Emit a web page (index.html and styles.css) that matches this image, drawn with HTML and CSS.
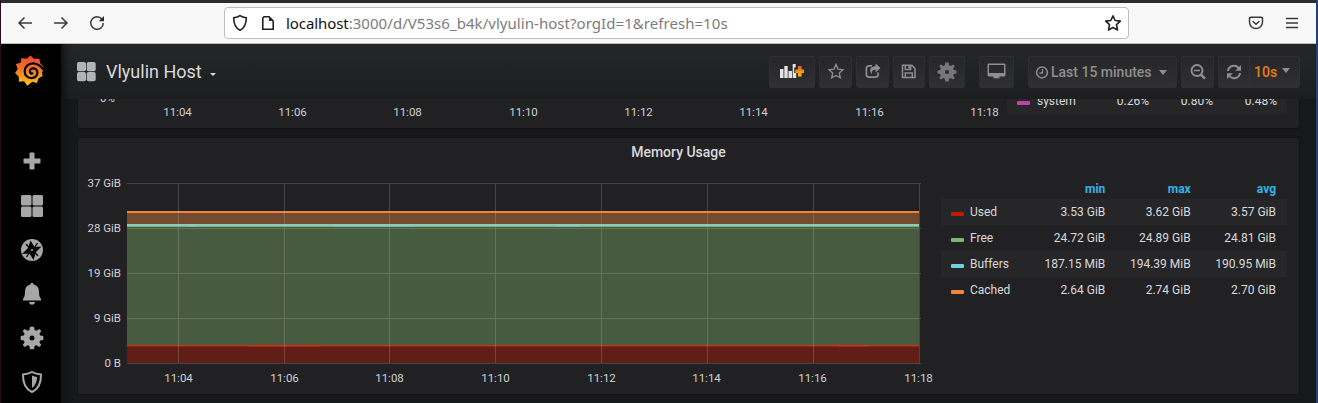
FILE: index.html
```html
<!DOCTYPE html>
<html lang="en">
<head>
<meta charset="utf-8">
<title>Vlyulin Host</title>
<link rel="stylesheet" href="styles.css">
</head>
<body>
<div class="window">
  <div class="browser">
    <svg class="nav-icon" width="18" height="18" viewBox="0 0 18 18"><path d="M16 9H3M8.500 3.500L3 9l5.500 5.500"/></svg>
    <svg class="nav-icon" width="18" height="18" viewBox="0 0 18 18"><path d="M2 9h13M9.500 3.500L15 9l-5.500 5.500"/></svg>
    <svg class="nav-icon" width="18" height="18" viewBox="0 0 18 18"><path d="M14 5.200A6.300 6.300 0 1 0 15.300 9"/><path d="M16 2v5.200h-5.200z"/></svg>
    <div class="url-bar">
      <svg width="16" height="18" viewBox="0 0 16 18"><path d="M8 1.700c2 1.500 4 1.900 6.300 2.100 0 6-1.600 10.300-6.300 12.400C3.300 14.100 1.700 9.800 1.700 3.800 4 3.600 6 3.200 8 1.700z"/></svg>
      <svg class="page-icon" width="14" height="16" viewBox="0 0 14 16"><path d="M3 1.800h5l4.200 4.200v8.200H1.800V3z"/><path d="M8 1l5 5H8z"/></svg>
      <span class="url"><b>localhost</b><i>:3000/d/V53s6_b4k/vlyulin-host?orgId=1&amp;refresh=10s</i></span>
      <svg class="bookmark" width="18" height="18" viewBox="0 0 18 18"><path d="M9 1.800l2.200 4.700 5.100.6-3.800 3.500 1 5.400L9 13.500 4.500 16l1-5.400L1.700 7.100l5.100-.6z" stroke-linejoin="round"/></svg>
    </div>
    <svg class="pocket" width="16" height="16" viewBox="0 0 16 16"><path d="M2.700 2.200h10.600c.8 0 1.200.5 1.200 1.200V7c0 3.800-3 6.500-6.500 6.500S1.500 10.800 1.500 7V3.400c0-.7.400-1.200 1.200-1.200zM4.700 6.200L8 9.300l3.300-3.100"/></svg>
    <svg class="burger" width="14" height="14" viewBox="0 0 14 14"><path d="M1 2.500h12M1 7h12M1 11.500h12"/></svg>
  </div>
  <div class="app">
    <nav class="sidebar">
      <svg class="logo" width="30" height="32" viewBox="0 0 30 32">
        <defs><linearGradient id="flame" x1="0" y1="0" x2="0" y2="1"><stop offset="0" stop-color="#f0452c"/><stop offset=".45" stop-color="#f2742b"/><stop offset="1" stop-color="#fcc80d"/></linearGradient></defs>
        <path fill="url(#flame)" d="M15.500.5l3.400 3.300 5.400-.1 1 4.800 2.900 2.700.3 4.200-1.500 1.500.6 4-4 2.300-1.700 4.900-4.600-1.300-5 3.900-3.200-4.500-5.200.5-.2-5.200L0 18l2.700-4L.900 9l4.800-1.300.8-4.600 5.300.7z"/>
        <path fill="none" stroke="#000" stroke-width="2.200" stroke-linecap="round" d="M28.500 14.500C25.500 10.500 22 8.400 18 8.400c-5 0-8.300 3.800-8.300 8 0 4 3 6.700 6.700 6.700 3.900 0 6.200-2.700 6-5.700-.2-2.700-2.200-4.300-4.400-4.100-2.300.2-3.300 1.900-3 3.500.200 1.300 1.300 2 2.300 1.700"/>
      </svg>
      <svg class="side-icon" width="24" height="24" viewBox="0 0 24 24"><rect x="3.500" y="9.500" width="17" height="5" rx="1"/><rect x="9.500" y="3.500" width="5" height="17" rx="1"/></svg>
      <svg class="side-icon" width="24" height="24" viewBox="0 0 24 24"><rect x="1" y="1" width="10.500" height="10.500" rx="1.500"/><rect x="12.500" y="1" width="10.500" height="10.500" rx="1.500"/><rect x="1" y="12.500" width="10.500" height="10.500" rx="1.500"/><rect x="12.500" y="12.500" width="10.500" height="10.500" rx="1.500"/></svg>
      <svg class="side-icon" width="24" height="24" viewBox="0 0 24 24"><circle cx="12" cy="12" r="11"/><path fill="#000" d="M10.500 2.500l4 6.500 7-.5-5.500 5.500-2.500 8-4-6.500-7.500.5L8 10z"/><path fill="none" stroke="#000" stroke-width="1.300" d="M6 6l3 3.500M18 18l-3-3.500M17.500 5l-3 4.500M6.500 19l3-4.500"/><circle cx="12" cy="12" r="1"/></svg>
      <svg class="side-icon" width="24" height="24" viewBox="0 0 24 24"><path d="M12 1c1 0 1.600.6 1.800 1.500C17.300 3.500 19 6 19 9.500c0 4 .5 5.500 2 7.500v1.500H3V17c1.500-2 2-3.500 2-7.500 0-3.500 1.700-6 5.200-7C10.400 1.600 11 1 12 1zM9 20h6c-.3 1.700-1.500 2.700-3 2.700S9.300 21.700 9 20z"/></svg>
      <svg class="side-icon" width="24" height="24" viewBox="0 0 24 24"><use href="#gear"/></svg>
      <svg class="side-icon" width="24" height="24" viewBox="0 0 24 24"><path d="M12 2c3 1.700 6 2.300 9 2.400C21.200 12.500 18.600 18.800 12 22 5.400 18.800 2.800 12.500 3 4.400 6 4.300 9 3.700 12 2z" fill="none" stroke="#aaa" stroke-width="2"/><path d="M12 5.500c1.600.8 3.400 1.300 5.200 1.500-.3 4.700-1.900 8.500-5.200 11z"/></svg>
    </nav>
    <main class="main">
      <header class="toolbar">
        <svg class="dash-icon" width="20" height="20" viewBox="0 0 20 20"><rect x="1" width="9" height="9.300" rx="1.800"/><rect x="10.700" width="9" height="9.300" rx="1.800"/><rect x="1" y="9.900" width="9" height="9.300" rx="1.800"/><rect x="10.700" y="9.900" width="9" height="9.300" rx="1.800"/></svg>
        <h1 class="title">Vlyulin Host</h1>
        <span class="caret title-caret"></span>
        <div class="actions">
          <button class="btn add"><svg width="26" height="18" viewBox="0 0 26 18"><defs><linearGradient id="plus" x1="0" y1="0" x2="0" y2="1"><stop offset="0" stop-color="#f05a28"/><stop offset="1" stop-color="#fbca0a"/></linearGradient></defs><path fill="#e3e3e3" d="M1 6h3.500v9H1zM5.300 3h3.400v12H5.300zM9.500 8H13v7H9.500zM13.700 1h3v3.500h-1.500v5.500h2v5h-3.500z"/><path fill="url(#plus)" d="M19 3h3.500v3.500H25V10h-2.500v3.500H19V10h-2.700V6.500H19z"/></svg></button>
          <button class="btn star"><svg width="18" height="18" viewBox="0 0 18 18"><path fill="none" stroke="#8e8e8e" stroke-width="1.300" d="M9 1.400l2 4.700 5 .6-3.700 3.300 1 4.800L9 12.400l-4.300 2.400 1-4.800L2 6.700l5-.6z"/></svg></button>
          <button class="btn share"><svg width="18" height="18" viewBox="0 0 18 18"><path fill="none" stroke="#8e8e8e" stroke-width="1.700" d="M8 2.800H5A2.600 2.600 0 0 0 2.400 5.400v6.200A2.600 2.600 0 0 0 5 14.200h6.500a2.600 2.600 0 0 0 2.600-2.600v-2"/><path fill="#8e8e8e" d="M11.500.5l5 4.500-5 4.500V6.800C8.300 6.800 7.500 8.500 8.200 11.500 4.500 7.600 6 3.200 11.500 3.200z"/></svg></button>
          <button class="btn save"><svg width="18" height="18" viewBox="0 0 18 18"><path fill="none" stroke="#8e8e8e" stroke-width="1.500" d="M2.500 2.300h9.300l3.200 3.200v8.900H2.500zM5.300 14v-4h7v4M5.300 2.500v4h5.400v-4"/><path fill="#8e8e8e" d="M8.300 2.500h2v3h-2z"/></svg></button>
          <button class="btn cog"><svg width="20" height="20" viewBox="0 0 24 24"><g id="gear"><path fill-rule="evenodd" d="M10 .7h4l.6 3.300 1.800.8 2.900-1.900 2 2-1.900 2.900.8 1.700 3.100.6v3.800l-3.100.6-.8 1.700 1.900 2.900-2 2-2.900-1.900-1.800.8-.6 3.300h-4l-.6-3.300-1.800-.8-2.900 1.900-2-2 1.900-2.900-.8-1.700-3.100-.6v-3.800l3.100-.6.800-1.700-1.900-2.900 2-2 2.900 1.900 1.800-.8zM12 9.500a2.500 2.500 0 1 0 0 5 2.500 2.500 0 0 0 0-5z"/></g></svg></button>
          <button class="btn tv"><svg width="20" height="18" viewBox="0 0 20 18"><path fill-rule="evenodd" d="M2 .5h15c.9 0 1.500.6 1.500 1.500v10c0 .9-.6 1.500-1.500 1.500h-4.500v1.800h-6v-1.800H2C1.100 13.500.5 12.900.5 12V2C.5 1.100 1.100.5 2 .5zm0 1.400v8h15v-8z"/></svg></button>
          <button class="btn time"><svg width="14" height="14" viewBox="0 0 14 14"><circle cx="7" cy="7.500" r="5.400" fill="none" stroke="#8e8e8e" stroke-width="1.500"/><path fill="none" stroke="#8e8e8e" stroke-width="1.300" d="M7.500 4v4H4.500"/></svg><span>Last 15 minutes</span><span class="caret"></span></button>
          <button class="btn zoom"><svg width="18" height="18" viewBox="0 0 18 18"><path fill="none" stroke="#8e8e8e" stroke-width="1.600" d="M5 7.500h6"/><circle cx="8" cy="7.500" r="5.500" fill="none" stroke="#8e8e8e" stroke-width="2"/><path fill="none" stroke="#8e8e8e" stroke-width="2.600" d="M11.800 11.500l4.200 4.200"/></svg></button>
          <div class="refresh">
            <button class="btn-in reload"><svg width="16" height="16" viewBox="0 0 16 16"><path fill="none" stroke="#8e8e8e" stroke-width="2" d="M2 7a6 6 0 0 1 10.500-3.200M14 9a6 6 0 0 1-10.500 3.200"/><path fill="#8e8e8e" d="M15 1v5.800H9.200zM1 15V9.200h5.800z"/></svg></button>
            <button class="btn-in interval"><span>10s</span><span class="caret"></span></button>
          </div>
        </div>
      </header>
      <div class="scroll">
        <section class="panel cpu">
          <svg class="cpu-axis" width="928" height="29" viewBox="78 99 928 29"><g class="tick"><text x="115" y="101.500" text-anchor="end">0%</text></g><g class="tick mid"><text x="177.500" y="116">11:04</text><text x="292.500" y="116">11:06</text><text x="407.500" y="116">11:08</text><text x="523.500" y="116">11:10</text><text x="638.500" y="116">11:12</text><text x="753.500" y="116">11:14</text><text x="869.500" y="116">11:16</text><text x="984.500" y="116">11:18</text></g></svg>
          <div class="cpu-legend"><span class="swatch magenta"></span><span class="name">system</span><span class="num">0.26%</span><span class="num">0.80%</span><span class="num">0.48%</span></div>
        </section>
        <section class="panel memory">
          <h2 class="panel-title">Memory Usage</h2>
          <div class="panel-body">
            <svg class="chart" width="862" height="220" viewBox="78 170 862 220">
              <g shape-rendering="crispEdges">
                <path fill="#754b2f" d="M127 212h792v13H127z"/>
                <path fill="#475b41" d="M127 226h792v120H127z"/>
                <path fill="#611e17" d="M127 346h792v17H127z"/>
                <path fill="#ef843c" d="M127 211h792v2H127z"/>
                <path fill="#8fc9bd" d="M127 224h792v2H127z"/>
                <path fill="#79b36c" d="M127 226h792v1H127z"/>
                <path fill="#6fc0a0" d="M188 226h9v1h-9zM334 226h80v1h-80zM555 226h25v1h-25z"/>
                <path fill="#bf3a10" d="M127 345h792v1H127z"/>
                <path fill="#a01c0b" d="M127 346h792v1H127z"/>
                <path fill="#c41a06" d="M249 346h70v1h-70zM838 346h30v1h-30z"/>
              </g>
              <path class="grid" d="M127 183.500h794M127 228.500h794M127 273.500h794M127 318.500h794M127 363.500h794M178.500 183v181M284.500 183v181M389.500 183v181M495.500 183v181M601.500 183v181M707.500 183v181M813.500 183v181M919.500 183v181"/>
              <g class="tick" text-anchor="end"><text x="121" y="187">37 GiB</text><text x="121" y="232">28 GiB</text><text x="121" y="277">19 GiB</text><text x="121" y="322">9 GiB</text><text x="121" y="367">0 B</text></g>
              <g class="tick mid"><text x="178.500" y="382">11:04</text><text x="284.500" y="382">11:06</text><text x="389.500" y="382">11:08</text><text x="495.500" y="382">11:10</text><text x="601.500" y="382">11:12</text><text x="706.500" y="382">11:14</text><text x="812.500" y="382">11:16</text><text x="918.500" y="382">11:18</text></g>
            </svg>
            <table class="legend">
              <thead><tr><th class="c-name"></th><th class="c-num">min</th><th class="c-num">max</th><th class="c-num">avg</th></tr></thead>
              <tbody>
                <tr><td><span class="swatch red"></span>Used</td><td>3.53 GiB</td><td>3.62 GiB</td><td>3.57 GiB</td></tr>
                <tr><td><span class="swatch green"></span>Free</td><td>24.72 GiB</td><td>24.89 GiB</td><td>24.81 GiB</td></tr>
                <tr><td><span class="swatch blue"></span>Buffers</td><td>187.15 MiB</td><td>194.39 MiB</td><td>190.95 MiB</td></tr>
                <tr><td><span class="swatch orange"></span>Cached</td><td>2.64 GiB</td><td>2.74 GiB</td><td>2.70 GiB</td></tr>
              </tbody>
            </table>
          </div>
        </section>
      </div>
    </main>
  </div>
</div>
</body>
</html>
```

FILE: styles.css
```css
* { box-sizing: border-box; }
body { margin: 0; height: 403px; overflow: hidden; background: #2b2a2c; font-family: Roboto, sans-serif; color: #d8d9da; }
svg { display: block; flex: none; }
button { font: inherit; color: inherit; margin: 0; cursor: pointer; }

.window { height: 403px; padding-top: 3px; border-left: 1px solid #2a0a22; border-right: 2px solid #26406f; display: flex; flex-direction: column; }

.browser { height: 41px; flex: none; background: #f8f8f8; border-bottom: 1px solid #b9bbbd; display: flex; align-items: center; padding-left: 15px; }
.browser svg path { fill: none; stroke: #3a3a3e; stroke-width: 1.5; }
.nav-icon { margin-right: 18px; }
.browser .nav-icon path + path, .browser .url-bar .page-icon path + path { fill: #2a2a2e; stroke: none; }
.url-bar { width: 905px; height: 32px; margin-left: 100px; background: #fff; border: 1px solid #bdbdbf; border-radius: 4px; display: flex; align-items: center; padding-left: 7px; }
.browser .url-bar svg path { stroke: #222; stroke-width: 1.6; }
.page-icon { margin-left: 13px; }
.url { margin-left: 11px; font: 15px/20px "Noto Sans", sans-serif; white-space: nowrap; color: #7c7c7e; }
.url b { font-weight: 400; color: #111; letter-spacing: -.08px; }
.url i { font-style: normal; letter-spacing: .05px; }
.bookmark { margin-left: auto; margin-right: 6px; }
.pocket { margin-left: 119px; }
.burger { margin-left: 21px; }

.app { flex: 1; min-height: 0; display: flex; background: #161719; }
.sidebar { width: 60px; flex: none; background: #000; display: flex; flex-direction: column; align-items: center; padding: 11px 0 0 2px; }
.logo { margin: 0 4px 62px 0; }
.side-icon { fill: #a7a7a7; margin-bottom: 20px; }
.logo + .side-icon { margin-bottom: 21px; }

.main { flex: 1; min-width: 0; background: linear-gradient(90deg, #121314, #17181a 14px); }
.toolbar { height: 55px; display: flex; align-items: center; padding: 0 16px 0 15px; background: linear-gradient(180deg, #242628, #1d1e20); box-shadow: inset 12px 0 12px -12px #000; }
.dash-icon { fill: #b2b3b4; }
.title { margin: 0 0 0 10px; font-size: 18px; font-weight: 400; line-height: 24px; white-space: nowrap; }
.caret { border: 4px solid transparent; border-top-color: currentColor; border-bottom: 0; display: block; flex: none; }
.title-caret { margin: 5px 0 0 8px; border-width: 3px 3px 0; }

.actions { margin-left: auto; display: flex; }
.btn, .refresh { height: 32px; border: 1px solid #2f2f32; border-radius: 2px; background: linear-gradient(180deg, #262628, #303032); padding: 0; display: flex; align-items: center; justify-content: center; fill: #8e8e8e; margin-right: 4px; flex: none; color: #8e8e8e; font-size: 14px; font-weight: 500; white-space: nowrap; }
.add { width: 46px; }
.star, .share, .zoom { width: 33px; }
.save { width: 32px; }
.cog { width: 36px; margin-right: 14px; fill: #777; }
.tv { width: 35px; margin-right: 14px; }
.time { width: 149px; justify-content: flex-start; padding-left: 6px; }
.time span { margin-left: 2px; }
.time .caret { margin: 2px 0 0 7px; }
.time .caret, .interval .caret { border-width: 5px 4.5px 0; }
.refresh { width: 82px; margin-right: 0; justify-content: flex-start; }
.btn-in { height: 30px; border: 0; background: none; padding: 0; display: flex; align-items: center; justify-content: center; }
.reload { width: 31px; border-right: 1px solid #323234; }
.interval { width: 49px; gap: 5px; color: #eb7b18; justify-content: flex-start; padding-left: 4px; }
.interval .caret { color: #8e8e8e; margin-bottom: 2px; }

.scroll { padding: 0 17px; display: flex; flex-direction: column; gap: 10px; }
.panel { background: #212124; border-radius: 2px; box-shadow: 0 0 0 1px #131315; }
.cpu { height: 29px; border-radius: 0 0 2px 2px; display: flex; overflow: hidden; box-shadow: -1px 1px 0 #131315, 1px 1px 0 #131315; }
.cpu-legend { width: 280px; height: 15px; background: #262628; display: flex; align-items: flex-end; font-size: 12px; line-height: 19px; overflow: hidden; margin-left: 1px; }
.cpu-legend > * { margin-bottom: 3px; }
.cpu-legend .name { width: 64px; }
.cpu-legend .num { width: 64px; text-align: right; }
.cpu-legend .name + .num { width: 48px; }
.memory { height: 256px; padding-top: 1px; }
.panel-title { margin: 0; height: 31px; text-align: center; font-size: 14px; font-weight: 500; line-height: 27px; padding-right: 20px; }
.panel-body { display: flex; }
.grid { fill: none; stroke: #c8c8c8; stroke-opacity: .22; shape-rendering: crispEdges; }
.tick { fill: #d0d1d2; font-size: 11.500px; }
.mid { text-anchor: middle; }

.legend { border-collapse: collapse; table-layout: fixed; width: 346px; height: 126px; margin: 7px 0 0 1px; font-size: 12px; }
.legend tr { height: 26px; }
.legend thead tr { height: 22px; }
.legend th, .legend td { padding: 0 11px 0 0; text-align: right; line-height: 18px; font-weight: 400; white-space: nowrap; }
.legend th { color: #33b5e5; font-weight: 700; padding-top: 2px; }
.legend td:first-child { text-align: left; padding-left: 10px; }
.legend tbody tr:nth-child(odd) { background: #262628; }
.c-name { width: 90px; }
.swatch { display: inline-block; width: 13px; height: 4px; border-radius: 1px; margin-right: 6px; vertical-align: 0; }
.cpu-legend .swatch { margin: 0 7px 9px 10px; flex: none; }
.red { background: #bf1b00; }
.green { background: #7eb26d; }
.blue { background: #6ed0e0; }
.orange { background: #ef843c; }
.magenta { background: #ba43a9; }
```
